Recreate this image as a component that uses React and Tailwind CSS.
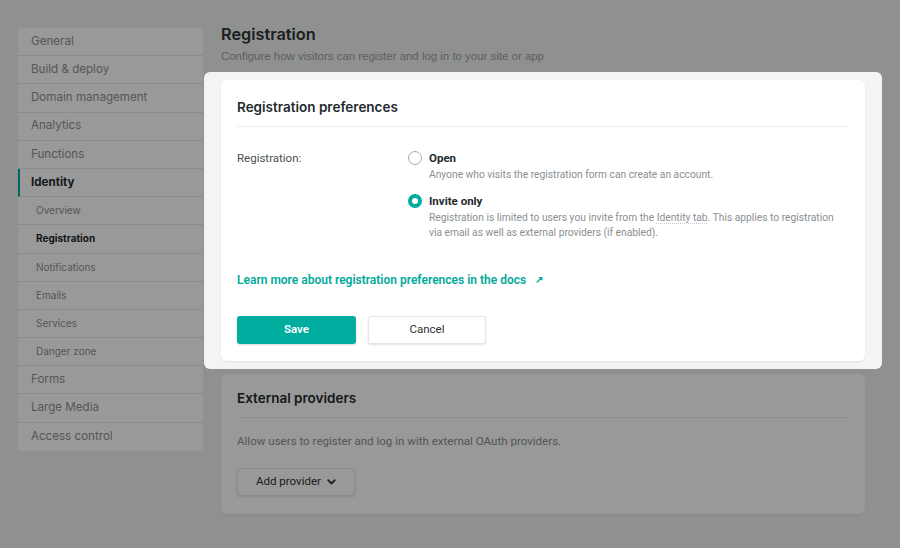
import React from 'react';

const navItems = [
  { label: 'General' },
  { label: 'Build & deploy' },
  { label: 'Domain management' },
  { label: 'Analytics' },
  { label: 'Functions' },
  { label: 'Identity', active: true },
  { label: 'Overview', sub: true },
  { label: 'Registration', sub: true, current: true },
  { label: 'Notifications', sub: true },
  { label: 'Emails', sub: true },
  { label: 'Services', sub: true },
  { label: 'Danger zone', sub: true },
  { label: 'Forms' },
  { label: 'Large Media' },
  { label: 'Access control' },
];

function NavItem({ item }) {
  let cls = 'h-[28.2px] flex items-center border-b border-[#e6e9ea] last:border-b-0 ';
  if (item.active) cls += 'border-l-2 border-l-[#00ad9f] pl-[11px] text-[11.6px] font-bold text-[#1e2b31]';
  else if (item.sub) cls += 'pl-[18px] text-[10px] ' + (item.current ? 'font-bold text-[#1e2b31]' : 'text-[#8d9194]');
  else cls += 'pl-[13px] text-[11.6px] text-[#8d9194]';
  return <div className={cls}>{item.label}</div>;
}

function Radio({ checked }) {
  return checked ? (
    <span className="block w-[14px] h-[14px] rounded-full border-[4px] border-[#00ad9f] bg-white shrink-0" />
  ) : (
    <span className="block w-[14px] h-[14px] rounded-full border border-[#a8adb0] bg-white shrink-0" />
  );
}

export default function App() {
  return (
    <div className="relative min-h-[548px] w-[900px] bg-[#eff1f1] font-['Inter',sans-serif] overflow-hidden">
      <div className="flex gap-[18px] pl-[18px] pt-[26px]">
        {/* Sidebar */}
        <nav className="mt-[2px] w-[185px] bg-white rounded-[4px] self-start overflow-hidden">
          {navItems.map((item) => (
            <NavItem key={item.label} item={item} />
          ))}
        </nav>

        {/* Main */}
        <main className="w-[644px]">
          <div className="-mt-[3px]">
            <h1 className="text-[16.3px] leading-[22px] font-semibold text-[#2f3336]">Registration</h1>
            <p className="mt-[4px] text-[11.45px] leading-[14px] text-[#9a9d9f] font-['Liberation_Sans',Arial,sans-serif]">
              Configure how visitors can register and log in to your site or app
            </p>
          </div>

          {/* Highlighted panel */}
          <div className="relative z-20 -mx-[17px] mt-[9px] bg-[#f2f4f5] rounded-[6px] px-[17px] py-[8px]">
            <section className="bg-white rounded-[6px] shadow-[0_1px_2px_rgba(0,0,0,0.08)] px-[16px] pt-[17px] pb-[17px]">
              <h2 className="text-[13.5px] leading-[20px] font-semibold text-[#1f2a30] pb-[9px] border-b border-[#eceef0] mr-[1px]">
                Registration preferences
              </h2>
              <div className="flex mt-[23px] font-['Roboto',sans-serif]">
                <div className="w-[171px] text-[11.5px] leading-[16px] text-[#4a4f52]">Registration:</div>
                <div className="flex flex-col gap-[11px]">
                  <div className="flex gap-[7px]">
                    <div className="pt-[1px]"><Radio /></div>
                    <div>
                      <div className="text-[11.5px] leading-[16px] font-bold text-[#1e2b31]">Open</div>
                      <div className="mt-[1px] text-[10.25px] leading-[15px] text-[#8a8f92]">
                        Anyone who visits the registration form can create an account.
                      </div>
                    </div>
                  </div>
                  <div className="flex gap-[7px]">
                    <div className="pt-[1px]"><Radio checked /></div>
                    <div>
                      <div className="text-[11.5px] leading-[16px] font-bold text-[#1e2b31]">Invite only</div>
                      <div className="mt-[1px] text-[10.25px] leading-[15px] text-[#8a8f92] w-[412px]">
                        Registration is limited to users you invite from the{' '}
                        <span className="underline decoration-dotted decoration-[#c5c9cc] underline-offset-2">Identity tab</span>. This applies to registration via email as well as external providers (if enabled).
                      </div>
                    </div>
                  </div>
                </div>
              </div>

              <a className="mt-[32px] flex items-center gap-[9px] text-[12px] leading-[16px] font-semibold text-[#00a99b] font-['Roboto',sans-serif]">
                Learn more about registration preferences in the docs
                <span className="text-[10px]">↗</span>
              </a>

              <div className="flex gap-[12px] mt-[28px] font-['Roboto',sans-serif]">
                <button className="w-[119px] h-[28px] rounded-[3px] bg-[#00ad9f] text-white text-[11.5px] font-semibold shadow-[0_1px_2px_rgba(0,0,0,0.15)]">
                  Save
                </button>
                <button className="w-[118px] h-[28px] rounded-[3px] bg-white text-[#2f3336] text-[11.5px] border border-[#e4e7e9] shadow-[0_1px_2px_rgba(0,0,0,0.12)]">
                  Cancel
                </button>
              </div>
            </section>
          </div>

          {/* External providers */}
          <section className="mt-[5px] bg-white rounded-[6px] shadow-[0_1px_2px_rgba(0,0,0,0.08)] px-[16px] pt-[14px] pb-[18px]">
            <h2 className="text-[13.5px] leading-[20px] font-semibold text-[#1f2a30] pb-[9px] border-b border-[#eceef0]">
              External providers
            </h2>
            <p className="mt-[15px] text-[11.55px] leading-[16px] text-[#8a8f92] font-['Roboto',sans-serif]">
              Allow users to register and log in with external OAuth providers.
            </p>
            <button className="mt-[19px] w-[118px] h-[28px] rounded-[3px] bg-white border border-[#e4e7e9] shadow-[0_1px_2px_rgba(0,0,0,0.12)] flex items-center justify-center gap-[6px] text-[11.5px] text-[#2f3336] font-['Roboto',sans-serif]">
              Add provider
              <svg width="9" height="6" viewBox="0 0 9 6" fill="none">
                <path d="M1.2 1.2 L4.5 4.5 L7.8 1.2" stroke="#2f3336" strokeWidth="1.8" strokeLinecap="round" strokeLinejoin="round" />
              </svg>
            </button>
          </section>
        </main>
      </div>

      {/* Dimming overlay */}
      <div className="absolute inset-0 z-10 bg-black/40" />
    </div>
  );
}
